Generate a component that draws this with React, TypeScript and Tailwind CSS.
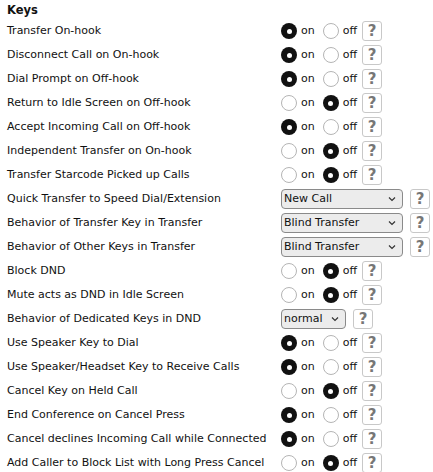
import React from 'react'

type Row =
  | { label: string; kind: 'radio'; on: boolean }
  | { label: string; kind: 'select'; value: string; width: string }

const rows: Row[] = [
  { label: 'Transfer On-hook', kind: 'radio', on: true },
  { label: 'Disconnect Call on On-hook', kind: 'radio', on: true },
  { label: 'Dial Prompt on Off-hook', kind: 'radio', on: true },
  { label: 'Return to Idle Screen on Off-hook', kind: 'radio', on: false },
  { label: 'Accept Incoming Call on Off-hook', kind: 'radio', on: true },
  { label: 'Independent Transfer on On-hook', kind: 'radio', on: false },
  { label: 'Transfer Starcode Picked up Calls', kind: 'radio', on: false },
  { label: 'Quick Transfer to Speed Dial/Extension', kind: 'select', value: 'New Call', width: 'w-[122px]' },
  { label: 'Behavior of Transfer Key in Transfer', kind: 'select', value: 'Blind Transfer', width: 'w-[122px]' },
  { label: 'Behavior of Other Keys in Transfer', kind: 'select', value: 'Blind Transfer', width: 'w-[122px]' },
  { label: 'Block DND', kind: 'radio', on: false },
  { label: 'Mute acts as DND in Idle Screen', kind: 'radio', on: false },
  { label: 'Behavior of Dedicated Keys in DND', kind: 'select', value: 'normal', width: 'w-[65px]' },
  { label: 'Use Speaker Key to Dial', kind: 'radio', on: true },
  { label: 'Use Speaker/Headset Key to Receive Calls', kind: 'radio', on: true },
  { label: 'Cancel Key on Held Call', kind: 'radio', on: false },
  { label: 'End Conference on Cancel Press', kind: 'radio', on: true },
  { label: 'Cancel declines Incoming Call while Connected', kind: 'radio', on: true },
  { label: 'Add Caller to Block List with Long Press Cancel', kind: 'radio', on: false },
]

function Radio({ checked }: { checked: boolean }) {
  if (checked) {
    return (
      <span className="flex h-4 w-4 items-center justify-center rounded-full bg-[#111]">
        <span className="h-[5px] w-[5px] rounded-full bg-white" />
      </span>
    )
  }
  return <span className="h-4 w-4 rounded-full border border-[#b5b5b5] bg-white" />
}

function Help() {
  return (
    <span className="ml-[5px] flex h-[20px] w-[20px] items-center justify-center rounded-[3px] border border-[#c8c8c8] bg-white text-[15px] font-bold text-[#777]">
      ?
    </span>
  )
}

export default function App() {
  return (
    <div className="bg-white px-[7px] pt-[2px] text-[11px] text-[#111]" style={{ fontFamily: '"DejaVu Sans", sans-serif' }}>
      <div className="h-[17px] text-[11.5px] font-bold leading-[17px]">Keys</div>
      {rows.map((row) => (
        <div key={row.label} className="flex h-[24px] items-center">
          <div className="w-[274px] shrink-0 whitespace-nowrap">{row.label}</div>
          {row.kind === 'radio' ? (
            <div className="flex items-center">
              <Radio checked={row.on} />
              <span className="ml-[4px] mr-[8px]">on</span>
              <Radio checked={!row.on} />
              <span className="ml-[4px]">off</span>
              <Help />
            </div>
          ) : (
            <div className="flex items-center">
              <div className={`flex h-[20px] ${row.width} items-center justify-between rounded-[4px] border border-[#8a8a8a] bg-[#ececec] pl-[2px] pr-[6px]`}>
                <span>{row.value}</span>
                <svg width="8" height="6" viewBox="0 0 8 6" fill="none" stroke="#333" strokeWidth="1.2">
                  <path d="M1 1.5 L4 4.5 L7 1.5" />
                </svg>
              </div>
              <span className="ml-[2px]">
                <Help />
              </span>
            </div>
          )}
        </div>
      ))}
    </div>
  )
}
